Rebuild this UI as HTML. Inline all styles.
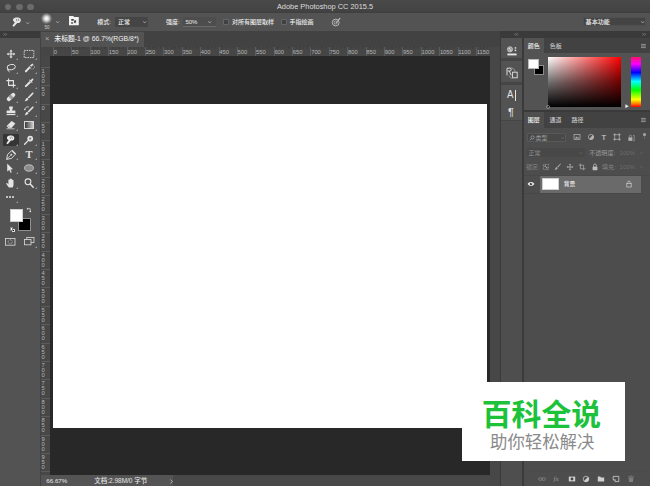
<!DOCTYPE html>
<html lang="zh-CN">
<head>
<meta charset="utf-8">
<title>Adobe Photoshop CC 2015.5</title>
<style>
*{box-sizing:border-box;margin:0;padding:0}
html,body{width:650px;height:486px;overflow:hidden;background:#535353}
body{position:relative;font-family:"Liberation Sans","Noto Sans CJK SC",sans-serif;color:#d6d6d6;font-size:6px;line-height:1}
.a{position:absolute}
.t{position:absolute;white-space:nowrap;line-height:1;transform:translateY(-50%)}
svg{position:absolute;overflow:visible}
#title{left:0;top:0;width:650px;height:12.5px;background:linear-gradient(#494949 0,#444 80%,#3e3e3e 100%)}
#title .t{left:0;width:650px;text-align:center;top:6.7px;font-size:7.4px;color:#dedede}
.tl{position:absolute;top:3.95px;width:6.4px;height:6.4px;border-radius:50%;background:#6b6b6b}
#opt{left:0;top:12.5px;width:650px;height:18px;background:#535353}
#tools{left:0;top:31px;width:40px;height:455px;background:#535353}
#toolhead{left:0;top:31px;width:40px;height:6.5px;background:#3a3a3a}
#docbg{left:40px;top:31px;width:460px;height:455px;background:#424242}
#tab{left:40.5px;top:32px;width:103.8px;height:14.6px;background:#535353}
#hr{left:41px;top:46.5px;width:449px;height:9.5px;background:repeating-linear-gradient(90deg,#3c3c3c 0,#3c3c3c 1.2px,rgba(0,0,0,0) 1.2px,rgba(0,0,0,0) 3.678px) 12px 0/100% 1.6px no-repeat,#464646}
#vr{left:41px;top:56px;width:9px;height:419px;background:#474747}
#cv{left:50px;top:56px;width:440px;height:419px;background:#282828}
#doc{left:53px;top:103.5px;width:434px;height:324.5px;background:#fff}
#status{left:41px;top:475.2px;width:449px;height:11px;background:linear-gradient(90deg,#545454 0,#545454 132px,#484848 132px)}
#rgap{left:490px;top:46.5px;width:10px;height:440px;background:#474747}
#dockhead{left:500px;top:31px;width:150px;height:7px;background:#3a3a3a}
#strip{left:501px;top:38px;width:20.5px;height:448px;background:#535353}
#div1{left:521.5px;top:38px;width:2px;height:448px;background:#3a3a3a}
#div0{left:499.5px;top:31px;width:1.5px;height:455px;background:#3a3a3a}
.rl{position:absolute;font-size:5.8px;color:#b6b6b6;transform:translateY(-50%);line-height:1;white-space:nowrap}
.vl{position:absolute;font-size:5.8px;color:#b6b6b6;line-height:5px;width:6px;text-align:center;white-space:pre-line}
.tk{position:absolute;background:#5c5c5c}
.ot{font-size:6px;color:#ececec;font-weight:500}
.ptabbar{position:absolute;left:523.5px;width:126.5px;background:#424242}
.ptab{position:absolute;background:#535353}
.pt{font-size:6px;color:#f0f0f0;font-weight:500}
.pt2{font-size:6px;color:#c4c4c4;font-weight:500}
.dim{font-size:6px;color:#8f8f8f}
#wm{left:461.9px;top:381.8px;width:163.3px;height:79px;background:#fff}
</style>
</head>
<body>
<div id="title" class="a"><div class="tl" style="left:5px"></div><div class="tl" style="left:16.3px"></div><div class="tl" style="left:27.3px"></div><div class="t">Adobe Photoshop CC 2015.5</div></div>
<div id="opt" class="a"></div>
<div id="tools" class="a"></div><div id="toolhead" class="a"></div>
<div id="docbg" class="a"></div><div id="tab" class="a"></div><div id="hr" class="a"></div><div id="vr" class="a"></div><div id="cv" class="a"></div><div id="doc" class="a"></div><div id="status" class="a"></div><div id="rgap" class="a"></div>
<div id="dockhead" class="a"></div><div id="div0" class="a"></div><div id="strip" class="a"></div><div id="div1" class="a"></div>
<div class="tk" style="left:53.00px;top:47px;width:.6px;height:9px"></div>
<div class="rl" style="left:53.70px;top:52.5px">0</div>
<div class="tk" style="left:71.39px;top:47px;width:.6px;height:9px"></div>
<div class="rl" style="left:72.09px;top:52.5px">50</div>
<div class="tk" style="left:89.78px;top:47px;width:.6px;height:9px"></div>
<div class="rl" style="left:90.48px;top:52.5px">100</div>
<div class="tk" style="left:108.17px;top:47px;width:.6px;height:9px"></div>
<div class="rl" style="left:108.87px;top:52.5px">150</div>
<div class="tk" style="left:126.56px;top:47px;width:.6px;height:9px"></div>
<div class="rl" style="left:127.26px;top:52.5px">200</div>
<div class="tk" style="left:144.95px;top:47px;width:.6px;height:9px"></div>
<div class="rl" style="left:145.65px;top:52.5px">250</div>
<div class="tk" style="left:163.34px;top:47px;width:.6px;height:9px"></div>
<div class="rl" style="left:164.04px;top:52.5px">300</div>
<div class="tk" style="left:181.73px;top:47px;width:.6px;height:9px"></div>
<div class="rl" style="left:182.43px;top:52.5px">350</div>
<div class="tk" style="left:200.12px;top:47px;width:.6px;height:9px"></div>
<div class="rl" style="left:200.82px;top:52.5px">400</div>
<div class="tk" style="left:218.51px;top:47px;width:.6px;height:9px"></div>
<div class="rl" style="left:219.21px;top:52.5px">450</div>
<div class="tk" style="left:236.90px;top:47px;width:.6px;height:9px"></div>
<div class="rl" style="left:237.60px;top:52.5px">500</div>
<div class="tk" style="left:255.29px;top:47px;width:.6px;height:9px"></div>
<div class="rl" style="left:255.99px;top:52.5px">550</div>
<div class="tk" style="left:273.68px;top:47px;width:.6px;height:9px"></div>
<div class="rl" style="left:274.38px;top:52.5px">600</div>
<div class="tk" style="left:292.07px;top:47px;width:.6px;height:9px"></div>
<div class="rl" style="left:292.77px;top:52.5px">650</div>
<div class="tk" style="left:310.46px;top:47px;width:.6px;height:9px"></div>
<div class="rl" style="left:311.16px;top:52.5px">700</div>
<div class="tk" style="left:328.85px;top:47px;width:.6px;height:9px"></div>
<div class="rl" style="left:329.55px;top:52.5px">750</div>
<div class="tk" style="left:347.24px;top:47px;width:.6px;height:9px"></div>
<div class="rl" style="left:347.94px;top:52.5px">800</div>
<div class="tk" style="left:365.63px;top:47px;width:.6px;height:9px"></div>
<div class="rl" style="left:366.33px;top:52.5px">850</div>
<div class="tk" style="left:384.02px;top:47px;width:.6px;height:9px"></div>
<div class="rl" style="left:384.72px;top:52.5px">900</div>
<div class="tk" style="left:402.41px;top:47px;width:.6px;height:9px"></div>
<div class="rl" style="left:403.11px;top:52.5px">950</div>
<div class="tk" style="left:420.80px;top:47px;width:.6px;height:9px"></div>
<div class="rl" style="left:421.50px;top:52.5px">1000</div>
<div class="tk" style="left:439.19px;top:47px;width:.6px;height:9px"></div>
<div class="rl" style="left:439.89px;top:52.5px">1050</div>
<div class="tk" style="left:457.58px;top:47px;width:.6px;height:9px"></div>
<div class="rl" style="left:458.28px;top:52.5px">1100</div>
<div class="tk" style="left:475.97px;top:47px;width:.6px;height:9px"></div>
<div class="rl" style="left:476.67px;top:52.5px">1150</div>
<div class="tk" style="left:41px;top:66.72px;width:9px;height:.6px"></div>
<div class="vl" style="left:40px;top:68.72px">1
0
0</div>
<div class="tk" style="left:41px;top:85.11px;width:9px;height:.6px"></div>
<div class="vl" style="left:40px;top:87.11px">5
0</div>
<div class="tk" style="left:41px;top:103.50px;width:9px;height:.6px"></div>
<div class="vl" style="left:40px;top:105.50px">0</div>
<div class="tk" style="left:41px;top:121.89px;width:9px;height:.6px"></div>
<div class="vl" style="left:40px;top:123.89px">5
0</div>
<div class="tk" style="left:41px;top:140.28px;width:9px;height:.6px"></div>
<div class="vl" style="left:40px;top:142.28px">1
0
0</div>
<div class="tk" style="left:41px;top:158.67px;width:9px;height:.6px"></div>
<div class="vl" style="left:40px;top:160.67px">1
5
0</div>
<div class="tk" style="left:41px;top:177.06px;width:9px;height:.6px"></div>
<div class="vl" style="left:40px;top:179.06px">2
0
0</div>
<div class="tk" style="left:41px;top:195.45px;width:9px;height:.6px"></div>
<div class="vl" style="left:40px;top:197.45px">2
5
0</div>
<div class="tk" style="left:41px;top:213.84px;width:9px;height:.6px"></div>
<div class="vl" style="left:40px;top:215.84px">3
0
0</div>
<div class="tk" style="left:41px;top:232.23px;width:9px;height:.6px"></div>
<div class="vl" style="left:40px;top:234.23px">3
5
0</div>
<div class="tk" style="left:41px;top:250.62px;width:9px;height:.6px"></div>
<div class="vl" style="left:40px;top:252.62px">4
0
0</div>
<div class="tk" style="left:41px;top:269.01px;width:9px;height:.6px"></div>
<div class="vl" style="left:40px;top:271.01px">4
5
0</div>
<div class="tk" style="left:41px;top:287.40px;width:9px;height:.6px"></div>
<div class="vl" style="left:40px;top:289.40px">5
0
0</div>
<div class="tk" style="left:41px;top:305.79px;width:9px;height:.6px"></div>
<div class="vl" style="left:40px;top:307.79px">5
5
0</div>
<div class="tk" style="left:41px;top:324.18px;width:9px;height:.6px"></div>
<div class="vl" style="left:40px;top:326.18px">6
0
0</div>
<div class="tk" style="left:41px;top:342.57px;width:9px;height:.6px"></div>
<div class="vl" style="left:40px;top:344.57px">6
5
0</div>
<div class="tk" style="left:41px;top:360.96px;width:9px;height:.6px"></div>
<div class="vl" style="left:40px;top:362.96px">7
0
0</div>
<div class="tk" style="left:41px;top:379.35px;width:9px;height:.6px"></div>
<div class="vl" style="left:40px;top:381.35px">7
5
0</div>
<div class="tk" style="left:41px;top:397.74px;width:9px;height:.6px"></div>
<div class="vl" style="left:40px;top:399.74px">8
0
0</div>
<div class="tk" style="left:41px;top:416.13px;width:9px;height:.6px"></div>
<div class="vl" style="left:40px;top:418.13px">8
5
0</div>
<div class="tk" style="left:41px;top:434.52px;width:9px;height:.6px"></div>
<div class="vl" style="left:40px;top:436.52px">9
0
0</div>
<div class="tk" style="left:41px;top:452.91px;width:9px;height:.6px"></div>
<div class="vl" style="left:40px;top:454.91px">9
5
0</div>
<div class="tk" style="left:41px;top:471.30px;width:9px;height:.6px"></div>
<div class="t" style="left:45px;top:39.2px;font-size:7.5px;color:#b0b0b0">×</div>
<div class="t" style="left:54.3px;top:39.4px;font-size:6.85px;color:#f0f0f0;font-weight:500">未标题-1 @ 66.7%(RGB/8*)</div>
<div class="t" style="left:46.3px;top:481.3px;font-size:6.2px;color:#e6e6e6;font-weight:500">66.67%</div>
<div class="t" style="left:94.2px;top:481.3px;font-size:6.5px;color:#e6e6e6;font-weight:500">文档:2.98M/0 字节</div>
<svg style="left:169.8px;top:479px" width="3" height="5" viewBox="0 0 3 5"><path d="M.5 .5 L2.4 2.5 L.5 4.5" fill="none" stroke="#c4c4c4" stroke-width=".8"/></svg>
<svg style="left:11.3px;top:16.1px" width="12.0" height="12.0" viewBox="-6 -6 12 12"><path d="M-3.4 -3.4 C-2.2 -4.9 2.4 -5 3.5 -3.2 C4.3 -1.7 3.6 .4 2 .9 L.2 .9 L-3.1 4.7 L-4.6 3.7 L-2.1 .2 C-4 -.2 -4.5 -2.2 -3.4 -3.4 Z" fill="#e8e8e8"/><path d="M-.8 -3.2 L-.1 -.8 M1.2 -3.4 L1.8 -1.1" stroke="#555" stroke-width=".6" fill="none"/></svg>
<svg style="left:25.7px;top:21.5px" width="3.4" height="3.0" viewBox="-1.7 -1.0 3.4 3.0"><path d="M-1.4 -0.7 L0 1.0 L1.4 -0.7" fill="none" stroke="#b4b4b4" stroke-width="0.75"/></svg>
<div class="a" style="left:41.3px;top:12.9px;width:11px;height:11px;border-radius:50%;background:radial-gradient(circle,#fff 0%,#e0e0e0 25%,rgba(170,170,170,.55) 55%,rgba(83,83,83,0) 75%)"></div>
<div class="t ot" style="left:44.4px;top:27.5px;font-size:4.6px;color:#cfcfcf">50</div>
<svg style="left:55.8px;top:21.0px" width="3.4" height="3.0" viewBox="-1.7 -1.0 3.4 3.0"><path d="M-1.4 -0.7 L0 1.0 L1.4 -0.7" fill="none" stroke="#b4b4b4" stroke-width="0.75"/></svg>
<svg style="left:69px;top:16.3px" width="9.8" height="9.3" viewBox="0 0 9.5 10" preserveAspectRatio="none"><path d="M0 0 H4 L5 1.2 H9.5 V10 H0 Z" fill="#f2f2f2"/><path d="M2.2 3.2 h2.4 v2 h-2.4z M5.6 4 l1.6 1.4 -1.2 2.6 -1.4 -1.2z M2.4 6.4 l1.6 .6 -.6 1.6 -1.4 -.4z" fill="#444"/></svg>
<div class="t ot" style="left:97.3px;top:21.7px;">模式:</div>
<div class="a" style="left:115px;top:17.3px;width:33px;height:9.4px;background:#454545;border-radius:1px"></div>
<div class="t ot" style="left:118px;top:21.7px;color:#eee">正常</div>
<svg style="left:142.60000000000002px;top:21.0px" width="3.4" height="3.0" viewBox="-1.7 -1.0 3.4 3.0"><path d="M-1.4 -0.7 L0 1.0 L1.4 -0.7" fill="none" stroke="#b4b4b4" stroke-width="0.75"/></svg>
<div class="t ot" style="left:166px;top:21.7px;">强度:</div>
<div class="a" style="left:183px;top:17.3px;width:33px;height:9.4px;background:#4d4d4d;border-bottom:.7px solid #6a6a6a"></div>
<div class="t ot" style="left:185.4px;top:21.7px;">50%</div>
<svg style="left:208.10000000000002px;top:21.0px" width="3.4" height="3.0" viewBox="-1.7 -1.0 3.4 3.0"><path d="M-1.4 -0.7 L0 1.0 L1.4 -0.7" fill="none" stroke="#b4b4b4" stroke-width="0.75"/></svg>
<div class="a" style="left:223.2px;top:18.9px;width:6.2px;height:6.2px;background:#414141;border:.6px solid #666;border-radius:.8px"></div>
<div class="t ot" style="left:232px;top:21.7px;">对所有图层取样</div>
<div class="a" style="left:281px;top:18.9px;width:6.2px;height:6.2px;background:#414141;border:.6px solid #666;border-radius:.8px"></div>
<div class="t ot" style="left:289.5px;top:21.7px;">手指绘画</div>
<svg style="left:331.4px;top:16.5px" width="10" height="10" viewBox="-5 -5 10 10"><circle cx="-.3" cy=".5" r="3.4" fill="none" stroke="#cfcfcf" stroke-width=".8"/><circle cx="-.3" cy=".5" r="1.6" fill="none" stroke="#cfcfcf" stroke-width=".6"/><path d="M-.6 1 L3.6 -4.2 L4.6 -3.4 L.2 1.6 Z" fill="#e6e6e6" stroke="#535353" stroke-width=".4"/></svg>
<div class="a" style="left:582.8px;top:16.8px;width:63px;height:9.4px;background:#444;border:.5px solid #505050;border-radius:1.2px"></div>
<div class="t ot" style="left:585.6px;top:21.9px;color:#f2f2f2;font-size:6.1px">基本功能</div>
<svg style="left:640.6999999999999px;top:21.0px" width="3.4" height="3.0" viewBox="-1.7 -1.0 3.4 3.0"><path d="M-1.4 -0.7 L0 1.0 L1.4 -0.7" fill="none" stroke="#b4b4b4" stroke-width="0.75"/></svg>
<div class="a" style="left:2.7px;top:133.5px;width:16px;height:12.2px;background:#353535;border-radius:1px"></div>
<svg style="left:16.2px;top:57.7px" width="2" height="2" viewBox="0 0 2 2"><path d="M2 0 V2 H0 Z" fill="#9a9a9a"/></svg>
<svg style="left:34.6px;top:57.7px" width="2" height="2" viewBox="0 0 2 2"><path d="M2 0 V2 H0 Z" fill="#9a9a9a"/></svg>
<svg style="left:16.2px;top:72.1px" width="2" height="2" viewBox="0 0 2 2"><path d="M2 0 V2 H0 Z" fill="#9a9a9a"/></svg>
<svg style="left:34.6px;top:72.1px" width="2" height="2" viewBox="0 0 2 2"><path d="M2 0 V2 H0 Z" fill="#9a9a9a"/></svg>
<svg style="left:16.2px;top:86.5px" width="2" height="2" viewBox="0 0 2 2"><path d="M2 0 V2 H0 Z" fill="#9a9a9a"/></svg>
<svg style="left:34.6px;top:86.5px" width="2" height="2" viewBox="0 0 2 2"><path d="M2 0 V2 H0 Z" fill="#9a9a9a"/></svg>
<svg style="left:16.2px;top:100.89999999999999px" width="2" height="2" viewBox="0 0 2 2"><path d="M2 0 V2 H0 Z" fill="#9a9a9a"/></svg>
<svg style="left:34.6px;top:100.89999999999999px" width="2" height="2" viewBox="0 0 2 2"><path d="M2 0 V2 H0 Z" fill="#9a9a9a"/></svg>
<svg style="left:16.2px;top:115.3px" width="2" height="2" viewBox="0 0 2 2"><path d="M2 0 V2 H0 Z" fill="#9a9a9a"/></svg>
<svg style="left:34.6px;top:115.3px" width="2" height="2" viewBox="0 0 2 2"><path d="M2 0 V2 H0 Z" fill="#9a9a9a"/></svg>
<svg style="left:16.2px;top:129.2px" width="2" height="2" viewBox="0 0 2 2"><path d="M2 0 V2 H0 Z" fill="#9a9a9a"/></svg>
<svg style="left:34.6px;top:129.2px" width="2" height="2" viewBox="0 0 2 2"><path d="M2 0 V2 H0 Z" fill="#9a9a9a"/></svg>
<svg style="left:16.2px;top:143.7px" width="2" height="2" viewBox="0 0 2 2"><path d="M2 0 V2 H0 Z" fill="#9a9a9a"/></svg>
<svg style="left:34.6px;top:143.7px" width="2" height="2" viewBox="0 0 2 2"><path d="M2 0 V2 H0 Z" fill="#9a9a9a"/></svg>
<svg style="left:16.2px;top:158.2px" width="2" height="2" viewBox="0 0 2 2"><path d="M2 0 V2 H0 Z" fill="#9a9a9a"/></svg>
<svg style="left:34.6px;top:158.2px" width="2" height="2" viewBox="0 0 2 2"><path d="M2 0 V2 H0 Z" fill="#9a9a9a"/></svg>
<svg style="left:16.2px;top:172.2px" width="2" height="2" viewBox="0 0 2 2"><path d="M2 0 V2 H0 Z" fill="#9a9a9a"/></svg>
<svg style="left:34.6px;top:172.2px" width="2" height="2" viewBox="0 0 2 2"><path d="M2 0 V2 H0 Z" fill="#9a9a9a"/></svg>
<svg style="left:16.2px;top:187.0px" width="2" height="2" viewBox="0 0 2 2"><path d="M2 0 V2 H0 Z" fill="#9a9a9a"/></svg>
<svg style="left:34.6px;top:187.0px" width="2" height="2" viewBox="0 0 2 2"><path d="M2 0 V2 H0 Z" fill="#9a9a9a"/></svg>
<svg style="left:4.6px;top:48.1px" width="12" height="12" viewBox="-6 -6 12 12"><path d="M0 -4.4 L1.6 -2.4 H.6 V-.6 H2.4 V-1.6 L4.4 0 L2.4 1.6 V.6 H.6 V2.4 H1.6 L0 4.4 L-1.6 2.4 H-.6 V.6 H-2.4 V1.6 L-4.4 0 L-2.4 -1.6 V-.6 H-.6 V-2.4 H-1.6 Z" fill="#e4e4e4"/></svg>
<svg style="left:23.2px;top:47.7px" width="12" height="12" viewBox="-6 -6 12 12"><rect x="-4.8" y="-3.6" width="9.6" height="7.2" fill="none" stroke="#e4e4e4" stroke-width=".9" stroke-dasharray="1.5 .9"/></svg>
<svg style="left:4.6px;top:62px" width="12" height="12" viewBox="-6 -6 12 12"><ellipse cx=".4" cy="-.8" rx="4.2" ry="2.7" fill="none" stroke="#e4e4e4" stroke-width=".9" transform="rotate(-12)"/><path d="M-3.2 .6 C-4 1.6 -3 2.4 -2.2 2 C-1.6 1.6 -2.6 .8 -3 1.6 C-3.4 2.6 -2.6 3.6 -1.4 4" fill="none" stroke="#e4e4e4" stroke-width=".8"/></svg>
<svg style="left:23.2px;top:62.3px" width="12" height="12" viewBox="-6 -6 12 12"><path d="M-3.8 4.2 L-4.2 3 L.4 -1.8 L1.8 -.6 L-2.6 4.2 Z" fill="#e4e4e4"/><path d="M1 -2.4 L3.6 -4.6 L4.4 -3.6 L2.4 -1.2 Z" fill="#e4e4e4"/><ellipse cx="3" cy="-1" rx="2.6" ry="2" fill="none" stroke="#e4e4e4" stroke-width=".6" stroke-dasharray=".9 .7"/></svg>
<svg style="left:4.6px;top:76.7px" width="12" height="12" viewBox="-6 -6 12 12"><path d="M-2.4 -4.6 V2.4 H4.6 M-4.6 -2.4 H2.4 V4.6" fill="none" stroke="#e4e4e4" stroke-width="1.1"/></svg>
<svg style="left:23.2px;top:76.7px" width="12" height="12" viewBox="-6 -6 12 12"><path d="M-4.2 4.2 L-3.8 2.4 L.6 -2 L2 -.6 L-2.4 3.8 Z" fill="#e4e4e4"/><path d="M0 -3 L3 0 L3.6 -.6 L2.8 -1.6 L4.2 -3 C4.8 -3.8 3.8 -4.8 3 -4.2 L1.6 -2.8 L.6 -3.6 Z" fill="#e4e4e4"/></svg>
<svg style="left:4.6px;top:90.8px" width="12" height="12" viewBox="-6 -6 12 12"><g transform="rotate(-42)"><rect x="-5" y="-2" width="10" height="4" rx="1.8" fill="#e4e4e4"/><rect x="-1.5" y="-2" width="3" height="4" fill="#9a9a9a"/></g></svg>
<svg style="left:23.2px;top:90.8px" width="12" height="12" viewBox="-6 -6 12 12"><path d="M4.2 -4.4 C4.8 -4 4.6 -3.4 4.2 -3 L-.2 1.6 L-1.4 .4 L3.2 -4.2 C3.6 -4.6 3.9 -4.6 4.2 -4.4 Z" fill="#e4e4e4"/><path d="M-1.8 .8 L-.6 2 C-1 3.4 -2.6 4.4 -4.4 4.2 C-3.6 3.6 -3.6 2.8 -3.2 2 C-2.9 1.3 -2.4 .9 -1.8 .8 Z" fill="#e4e4e4"/></svg>
<svg style="left:4.6px;top:105.4px" width="12" height="12" viewBox="-6 -6 12 12"><path d="M-1.7 -4.4 H1.7 C2.4 -3.2 1.2 -1.6 1 -.4 H3.6 C4.2 -.4 4.4 0 4.4 .6 V2 H-4.4 V.6 C-4.4 0 -4.2 -.4 -3.6 -.4 H-1 C-1.2 -1.6 -2.4 -3.2 -1.7 -4.4 Z" fill="#e4e4e4"/><rect x="-4.4" y="2.8" width="8.8" height="1.3" fill="#e4e4e4"/></svg>
<svg style="left:23.2px;top:105.2px" width="12" height="12" viewBox="-6 -6 12 12"><path d="M4.2 -4.4 C4.8 -4 4.6 -3.4 4.2 -3 L-.2 1.6 L-1.4 .4 L3.2 -4.2 C3.6 -4.6 3.9 -4.6 4.2 -4.4 Z" fill="#e4e4e4"/><path d="M-1.8 .8 L-.6 2 C-1 3.4 -2.6 4.4 -4.4 4.2 C-3.6 3.6 -3.6 2.8 -3.2 2 C-2.9 1.3 -2.4 .9 -1.8 .8 Z" fill="#e4e4e4"/><path d="M-4.2 -1.4 A3 3 0 0 1 -.2 -4" fill="none" stroke="#e4e4e4" stroke-width=".8"/><path d="M-5.2 -2 L-3.2 -2.2 L-4 -.4 Z" fill="#e4e4e4"/></svg>
<svg style="left:4.6px;top:119.4px" width="12" height="12" viewBox="-6 -6 12 12"><path d="M-4.4 1 L.6 -4 L4.4 -1.4 L.2 3.2 H-2.4 Z" fill="#e4e4e4"/><path d="M-3.2 .6 L-.6 2.6" stroke="#666" stroke-width=".5"/><path d="M-4.6 3.8 H3.6" stroke="#e4e4e4" stroke-width=".7"/></svg>
<div class="a" style="left:24.2px;top:121.3px;width:9.4px;height:7.4px;border:.8px solid #d8d8d8;background:linear-gradient(90deg,#3a3a3a,#c8c8c8)"></div>
<svg style="left:5.200000000000001px;top:134.10000000000002px" width="11.399999999999999" height="11.399999999999999" viewBox="-6 -6 12 12"><path d="M-3.4 -3.4 C-2.2 -4.9 2.4 -5 3.5 -3.2 C4.3 -1.7 3.6 .4 2 .9 L.2 .9 L-3.1 4.7 L-4.6 3.7 L-2.1 .2 C-4 -.2 -4.5 -2.2 -3.4 -3.4 Z" fill="#ededed"/><path d="M-.8 -3.2 L-.1 -.8 M1.2 -3.4 L1.8 -1.1" stroke="#555" stroke-width=".6" fill="none"/></svg>
<svg style="left:23.2px;top:134px" width="12" height="12" viewBox="-6 -6 12 12"><circle cx="1.2" cy="-1.4" r="2.9" fill="#e4e4e4"/><path d="M-.6 .4 L-4.4 4.2" stroke="#e4e4e4" stroke-width="1.3" stroke-linecap="round"/><circle cx="1.2" cy="-1.4" r="1.1" fill="#777"/></svg>
<svg style="left:4.6px;top:148.5px" width="12" height="12" viewBox="-6 -6 12 12"><path d="M-4.4 4.4 L-3.4 -.6 L.6 -4.2 L4.2 -.6 L.6 3.4 Z" fill="none" stroke="#e4e4e4" stroke-width=".9" stroke-linejoin="round"/><path d="M-4.2 4.2 L-.2 .2" stroke="#e4e4e4" stroke-width=".7"/><circle cx=".3" cy="-.3" r=".9" fill="#e4e4e4"/><path d="M1 -4.6 L4.6 -1" stroke="#e4e4e4" stroke-width="1.2"/></svg>
<div class="t" style="left:25.6px;top:154.6px;font-family:'Liberation Serif',serif;font-size:10.5px;font-weight:bold;color:#e4e4e4">T</div>
<svg style="left:4.199999999999999px;top:162.2px" width="12" height="12" viewBox="-6 -6 12 12"><path d="M-2.8 -4.6 L3 1.2 L.4 1.4 L1.8 4.2 L.6 4.8 L-.8 2 L-2.8 3.6 Z" fill="#e4e4e4"/></svg>
<svg style="left:22.8px;top:161.8px" width="12" height="12" viewBox="-6 -6 12 12"><ellipse cx="0" cy="0" rx="4.4" ry="3.2" fill="#8c8c8c" stroke="#cfcfcf" stroke-width=".8"/></svg>
<svg style="left:4.6px;top:177.2px" width="12" height="12" viewBox="-6 -6 12 12"><path d="M-2.2 4.6 C-3.2 3 -4.6 1.6 -4.8 .6 C-4.9 -.2 -4 -.4 -3.4 .4 L-2.6 1.4 V-2.8 C-2.6 -3.8 -1.4 -3.8 -1.4 -2.8 V-3.8 C-1.4 -4.8 -.1 -4.8 -.1 -3.8 V-3.4 C-.1 -4.4 1.2 -4.4 1.2 -3.4 V-2.6 C1.2 -3.5 2.5 -3.5 2.5 -2.6 V1.6 C2.5 3 2 3.8 1.6 4.6 Z" fill="#e4e4e4"/></svg>
<svg style="left:22.8px;top:177.2px" width="12" height="12" viewBox="-6 -6 12 12"><circle cx="-1" cy="-1.2" r="2.9" fill="none" stroke="#e4e4e4" stroke-width="1.1"/><path d="M1.2 1 L4.2 4.2" stroke="#e4e4e4" stroke-width="1.5" stroke-linecap="round"/></svg>
<div class="a" style="left:6px;top:196px;width:2px;height:2px;border-radius:50%;background:#e4e4e4"></div>
<div class="a" style="left:9.2px;top:196px;width:2px;height:2px;border-radius:50%;background:#e4e4e4"></div>
<div class="a" style="left:12.4px;top:196px;width:2px;height:2px;border-radius:50%;background:#e4e4e4"></div>
<svg style="left:16.2px;top:200.5px" width="2" height="2" viewBox="0 0 2 2"><path d="M2 0 V2 H0 Z" fill="#9a9a9a"/></svg>
<div class="a" style="left:18.3px;top:217.6px;width:13px;height:13px;background:#000;border:.8px solid #909090"></div>
<div class="a" style="left:10px;top:208.5px;width:13.3px;height:13.2px;background:#fff;border:.6px solid #cfcfcf"></div>
<svg style="left:25.3px;top:205.8px" width="8" height="8" viewBox="-4 -4 8 8"><g transform="scale(.8)"><path d="M-2 -1.6 H1.6 V2" fill="none" stroke="#e4e4e4" stroke-width=".9"/><path d="M-3 -1.6 L-1.4 -3 V-.2 Z M1.6 3 L.2 1.4 H3 Z" fill="#e4e4e4"/></g></svg>
<div class="a" style="left:11.6px;top:228.8px;width:3.6px;height:3.6px;background:#111;border:.5px solid #ddd"></div><div class="a" style="left:9.8px;top:227px;width:3.6px;height:3.6px;background:#fff;border:.4px solid #888"></div>
<svg style="left:5px;top:237.8px" width="10.4" height="7.6" viewBox="0 0 10.4 7.6"><rect x=".4" y=".4" width="9.6" height="6.8" fill="none" stroke="#dcdcdc" stroke-width=".8"/><circle cx="5.2" cy="3.8" r="2" fill="none" stroke="#dcdcdc" stroke-width=".7" stroke-dasharray=".8 .6"/></svg>
<svg style="left:23.8px;top:237.2px" width="10.4" height="8.4" viewBox="0 0 10.4 8.4"><rect x="2.8" y=".4" width="7.2" height="5.2" fill="#535353" stroke="#dcdcdc" stroke-width=".8"/><rect x=".4" y="2.6" width="6.6" height="5.2" fill="#535353" stroke="#dcdcdc" stroke-width=".8"/></svg>
<svg style="left:34.6px;top:245.5px" width="2" height="2" viewBox="0 0 2 2"><path d="M2 0 V2 H0 Z" fill="#9a9a9a"/></svg>
<svg style="left:2.8px;top:32.9px" width="4.4" height="2.8" viewBox="-2.2 -1.4 4.4 2.8"><g transform="scale(1,1)"><path d="M-1.8 -1.2 L-.6 0 L-1.8 1.2 M.2 -1.2 L1.4 0 L.2 1.2" fill="none" stroke="#9c9c9c" stroke-width=".6"/></g></svg>
<svg style="left:514.1999999999999px;top:32.9px" width="4.4" height="2.8" viewBox="-2.2 -1.4 4.4 2.8"><g transform="scale(-1,1)"><path d="M-1.8 -1.2 L-.6 0 L-1.8 1.2 M.2 -1.2 L1.4 0 L.2 1.2" fill="none" stroke="#9c9c9c" stroke-width=".6"/></g></svg>
<svg style="left:641.8px;top:32.9px" width="4.4" height="2.8" viewBox="-2.2 -1.4 4.4 2.8"><g transform="scale(1,1)"><path d="M-1.8 -1.2 L-.6 0 L-1.8 1.2 M.2 -1.2 L1.4 0 L.2 1.2" fill="none" stroke="#9c9c9c" stroke-width=".6"/></g></svg>
<div class="a" style="left:501px;top:121px;width:20.5px;height:365px;background:#4e4e4e"></div>
<div class="a" style="left:501px;top:58.2px;width:20.5px;height:2.4px;background:#454545"></div>
<div class="a" style="left:501px;top:82.2px;width:20.5px;height:2.4px;background:#454545"></div>
<div class="a" style="left:501px;top:119.6px;width:20.5px;height:1.6px;background:#454545"></div>
<svg style="left:505.5px;top:44.5px" width="12" height="12" viewBox="-6 -6 12 12"><circle cx="-2" cy="-1.7" r="2.6" fill="#9a9a9a" stroke="#e4e4e4" stroke-width=".6"/><circle cx="-2.6" cy="-2.2" r=".8" fill="#e4e4e4"/><circle cx="-1.2" cy="-.8" r=".7" fill="#e4e4e4"/><rect x="2.7" y="-3.8" width="1.5" height="1.5" fill="#e4e4e4"/><rect x="2.7" y="-1.4" width="1.5" height="1.5" fill="#e4e4e4"/><rect x="-4.6" y="2.5" width="9.2" height="1.9" fill="#e4e4e4"/></svg>
<svg style="left:505.5px;top:66.5px" width="12" height="12" viewBox="-6 -6 12 12"><path d="M-5 2.4 V-4.8 H-2.2 C-.2 -4.8 -.2 -2 -2.2 -2 H-4.4 M-2.6 -2 L-.8 2.4" fill="none" stroke="#e4e4e4" stroke-width=".9"/><rect x=".6" y="-.8" width="4.6" height="5.6" fill="none" stroke="#e4e4e4" stroke-width=".9"/><path d="M-2.6 -5 C.6 -5.6 3 -4 3 -1.2 M-2.8 2.6 C-2.6 4.6 -1 5.4 .6 5" fill="none" stroke="#bdbdbd" stroke-width=".6"/></svg>
<div class="t" style="left:507.4px;top:95.4px;font-size:11.2px;color:#e4e4e4;transform:translateY(-50%) scaleX(.86);transform-origin:0 50%">A</div>
<div class="a" style="left:515.3px;top:90.2px;width:.9px;height:10.6px;background:#e4e4e4"></div>
<div class="t" style="left:507.6px;top:112.6px;font-size:11.5px;color:#e4e4e4;transform:translateY(-50%) scaleX(.95);transform-origin:0 50%">¶</div>
<div class="ptabbar" style="top:38px;height:15.2px"></div>
<div class="ptab" style="left:523.5px;top:38px;width:20.5px;height:15.2px"></div>
<div class="t pt" style="left:527.8px;top:45.8px;">颜色</div>
<div class="t pt2" style="left:549.8px;top:45.8px;">色板</div>
<svg style="left:640.9px;top:43.8px" width="4.8" height="4" viewBox="0 0 4.8 4"><path d="M0 .4 H4.8 M0 2 H4.8 M0 3.6 H4.8" stroke="#b0b0b0" stroke-width=".7"/></svg>
<div class="a" style="left:533.5px;top:65.4px;width:10.4px;height:9.5px;background:#000;border:.7px solid #8c8c8c"></div>
<div class="a" style="left:528px;top:59px;width:10.5px;height:9.8px;background:#fff;border:.6px solid #bbb"></div>
<div class="a" style="left:547.8px;top:57.4px;width:73.6px;height:49.8px;background:linear-gradient(to top,#000 0%,rgba(0,0,0,.56) 50%,rgba(0,0,0,0) 100%),linear-gradient(to right,#fff,#f00)"></div>
<div class="a" style="left:546.4px;top:105.4px;width:3.4px;height:3.4px;border-radius:50%;border:.6px solid #8a8a8a"></div>
<div class="a" style="left:630.6px;top:57.4px;width:10.4px;height:49.8px;background:linear-gradient(to bottom,#ff1070 0%,#f0f 14%,#00f 31%,#0ff 49%,#0f0 66%,#ff0 85%,#f80 93%,#f00 100%)"></div>
<svg style="left:624.6px;top:104px" width="4" height="4.4" viewBox="0 0 4 4.4"><path d="M.4 .4 L3.6 2.2 L.4 4 Z" fill="#fff" stroke="#aaa" stroke-width=".4"/></svg>
<div class="a" style="left:523.5px;top:110.2px;width:126.5px;height:2.2px;background:#3a3a3a"></div>
<div class="a" style="left:523.5px;top:127.8px;width:126.5px;height:358.2px;background:#4d4d4d"></div>
<div class="ptabbar" style="top:112.4px;height:15.4px"></div>
<div class="ptab" style="left:523.5px;top:112.4px;width:20.8px;height:15.4px;background:#4e4e4e"></div>
<div class="t pt" style="left:527.8px;top:120.2px;">图层</div>
<div class="t pt2" style="left:549.6px;top:120.2px;">通道</div>
<div class="t pt2" style="left:571.4px;top:120.2px;">路径</div>
<svg style="left:640.9px;top:118.2px" width="4.8" height="4" viewBox="0 0 4.8 4"><path d="M0 .4 H4.8 M0 2 H4.8 M0 3.6 H4.8" stroke="#b0b0b0" stroke-width=".7"/></svg>
<div class="a" style="left:527px;top:132.8px;width:39px;height:9.4px;background:#484848;border:.5px solid #585858;border-radius:1px"></div>
<svg style="left:528.5px;top:134.5px" width="6" height="6" viewBox="-3 -3 6 6"><circle cx=".6" cy="-.6" r="1.6" fill="none" stroke="#a8a8a8" stroke-width=".7"/><path d="M-.6 .6 L-2.2 2.2" stroke="#a8a8a8" stroke-width=".8"/></svg>
<div class="t dim" style="left:535.6px;top:137.6px;color:#9c9c9c">类型</div>
<svg style="left:560.9px;top:136.9px" width="3.2" height="2.8" viewBox="-1.6 -0.9 3.2 2.8"><path d="M-1.3 -0.6000000000000001 L0 0.9 L1.3 -0.6000000000000001" fill="none" stroke="#777" stroke-width="0.6"/></svg>
<svg style="left:573.2px;top:133.4px" width="8" height="8" viewBox="-4 -4 8 8"><rect x="-3" y="-2.4" width="6" height="4.8" fill="none" stroke="#b4b4b4" stroke-width=".7"/><path d="M-2.2 1.6 L-.6 -.4 L.6 .8 L1.4 0 L2.2 1.6 Z" fill="#b4b4b4"/></svg>
<svg style="left:587px;top:133.4px" width="8" height="8" viewBox="-4 -4 8 8"><circle r="2.7" fill="none" stroke="#b4b4b4" stroke-width=".7"/><path d="M0 -2.7 A2.7 2.7 0 0 1 0 2.7 Z" fill="#b4b4b4" transform="rotate(40)"/></svg>
<div class="t" style="left:601.6px;top:137.6px;font-size:7.6px;font-weight:bold;color:#b4b4b4">T</div>
<svg style="left:613.4px;top:133.4px" width="8" height="8" viewBox="-4 -4 8 8"><rect x="-2.2" y="-2.2" width="4.4" height="4.4" fill="none" stroke="#b4b4b4" stroke-width=".7"/><path d="M-3.2 -2.2 H-2.2 V-3.2 M3.2 -2.2 H2.2 V-3.2 M-3.2 2.2 H-2.2 V3.2 M3.2 2.2 H2.2 V3.2" stroke="#b4b4b4" stroke-width=".7" fill="none"/><rect x="-3.3" y="-3.3" width="1.6" height="1.6" fill="#b4b4b4"/><rect x="1.7" y="-3.3" width="1.6" height="1.6" fill="#b4b4b4"/><rect x="-3.3" y="1.7" width="1.6" height="1.6" fill="#b4b4b4"/><rect x="1.7" y="1.7" width="1.6" height="1.6" fill="#b4b4b4"/></svg>
<svg style="left:627px;top:133.6px" width="8" height="8" viewBox="-4 -4 8 8"><rect x="-2.6" y="-.6" width="4" height="3.4" fill="#b4b4b4"/><path d="M-1.6 -.6 V-1.6 A1.1 1.1 0 0 1 .6 -1.6 V-.6" fill="none" stroke="#b4b4b4" stroke-width=".6"/><path d="M2 -2.6 H3.2 V2.8 H2.2" fill="none" stroke="#b4b4b4" stroke-width=".6"/></svg>
<div class="a" style="left:642.6px;top:132.6px;width:3.6px;height:3.6px;border-radius:50%;background:#a8a8a8"></div><div class="a" style="left:643.6px;top:136.2px;width:1.6px;height:3px;background:#666"></div>
<div class="a" style="left:527px;top:147.6px;width:58px;height:9.6px;background:#484848;border-radius:1px"></div>
<div class="t dim" style="left:528.4px;top:152.5px;">正常</div>
<svg style="left:579.0px;top:151.9px" width="3.2" height="2.8" viewBox="-1.6 -0.9 3.2 2.8"><path d="M-1.3 -0.6000000000000001 L0 0.9 L1.3 -0.6000000000000001" fill="none" stroke="#6c6c6c" stroke-width="0.6"/></svg>
<div class="t dim" style="left:589.2px;top:152.5px;font-size:6.1px;color:#9a9a9a">不透明度:</div>
<div class="t dim" style="left:619.6px;top:152.5px;color:#6c6c6c">100%</div>
<svg style="left:640.4px;top:151.9px" width="3.2" height="2.8" viewBox="-1.6 -0.9 3.2 2.8"><path d="M-1.3 -0.6000000000000001 L0 0.9 L1.3 -0.6000000000000001" fill="none" stroke="#686868" stroke-width="0.6"/></svg>
<div class="t dim" style="left:526px;top:167px;color:#848484">锁定:</div>
<svg style="left:542.2px;top:162.8px" width="8" height="8" viewBox="-4 -4 8 8"><rect x="-2.6" y="-2.6" width="5.2" height="5.2" fill="none" stroke="#a6a6a6" stroke-width=".7" stroke-dasharray="1 .6"/><path d="M-1.4 -1.4 h1.4 v1.4 h1.4 v1.4 h-1.4 v-1.4 h-1.4z" fill="#a6a6a6"/></svg>
<svg style="left:554.3px;top:162.8px" width="8" height="8" viewBox="-4 -4 8 8"><path d="M3.2 -3.4 L.2 .4 L-.8 -.4 L2.6 -3.6 Z" fill="#a6a6a6"/><path d="M-1.2 0 L-.2 .9 C-.6 2.2 -2 3 -3.4 2.8 C-2.8 2.2 -2.6 1.4 -2.4 .8 C-2.2 .2 -1.8 0 -1.2 0 Z" fill="#a6a6a6"/></svg>
<svg style="left:566.2px;top:162.8px" width="8" height="8" viewBox="-4 -4 8 8"><path d="M0 -3.4 L1.2 -2 H.4 V-.4 H2 V-1.2 L3.4 0 L2 1.2 V.4 H.4 V2 H1.2 L0 3.4 L-1.2 2 H-.4 V.4 H-2 V1.2 L-3.4 0 L-2 -1.2 V-.4 H-.4 V-2 H-1.2 Z" fill="#a6a6a6"/></svg>
<svg style="left:578.4px;top:162.8px" width="8" height="8" viewBox="-4 -4 8 8"><path d="M-1.6 -3.4 V1.8 H3.4 M-3.2 -1.8 H1.6 V3.2" fill="none" stroke="#a6a6a6" stroke-width=".8"/></svg>
<svg style="left:590.8px;top:162.6px" width="8" height="8" viewBox="-4 -4 8 8"><g transform="scale(1.0)"><rect x="-2.4" y="-.4" width="4.8" height="3.6" rx=".4" fill="#bdbdbd"/><path d="M-1.4 -.4 V-1.6 A1.4 1.4 0 0 1 1.4 -1.6 V-.4" fill="none" stroke="#bdbdbd" stroke-width=".8"/></g></svg>
<div class="t dim" style="left:602px;top:167px;color:#848484">填充:</div>
<div class="t dim" style="left:619.6px;top:167px;color:#6c6c6c">100%</div>
<svg style="left:640.4px;top:166.29999999999998px" width="3.2" height="2.8" viewBox="-1.6 -0.9 3.2 2.8"><path d="M-1.3 -0.6000000000000001 L0 0.9 L1.3 -0.6000000000000001" fill="none" stroke="#686868" stroke-width="0.6"/></svg>
<div class="a" style="left:523.5px;top:174.6px;width:126.5px;height:.8px;background:#484848"></div>
<div class="a" style="left:540px;top:175.6px;width:101.4px;height:17.2px;background:#6a6a6a"></div>
<div class="a" style="left:523.5px;top:193.4px;width:118px;height:.7px;background:#474747"></div>
<svg style="left:526.8px;top:180px" width="8" height="8" viewBox="-4 -4 8 8"><path d="M-3.4 0 C-1.8 -2.6 1.8 -2.6 3.4 0 C1.8 2.6 -1.8 2.6 -3.4 0 Z" fill="#e8e8e8"/><circle r="1.25" fill="#444"/><circle cx=".3" cy="-.3" r=".45" fill="#e8e8e8"/></svg>
<div class="a" style="left:542.2px;top:177.8px;width:16.8px;height:12.4px;background:#fff;border:.5px solid #cfcfcf"></div>
<div class="t pt" style="left:563.8px;top:185px;font-size:5.8px;color:#ededed">背景</div>
<svg style="left:625px;top:180px" width="8" height="8" viewBox="-4 -4 8 8"><rect x="-2.2" y="-.4" width="4.4" height="3.4" fill="none" stroke="#cfcfcf" stroke-width=".7"/><path d="M-1.3 -.4 V-1.6 A1.3 1.3 0 0 1 1.3 -1.6 V-.4" fill="none" stroke="#cfcfcf" stroke-width=".7"/></svg>
<div class="a" style="left:641.6px;top:175.6px;width:8.4px;height:295px;background:#4d4d4d"></div>
<div class="a" style="left:523.5px;top:470.6px;width:126.5px;height:.8px;background:#4b4b4b"></div>
<svg style="left:537.8px;top:475.2px" width="8" height="8" viewBox="-4 -4 8 8"><rect x="-3.4" y="-1.3" width="3.6" height="2.6" rx="1.3" fill="none" stroke="#8a8a8a" stroke-width=".7"/><rect x="-.2" y="-1.3" width="3.6" height="2.6" rx="1.3" fill="none" stroke="#8a8a8a" stroke-width=".7"/></svg>
<div class="t" style="left:553.6px;top:479px;font-family:'Liberation Serif',serif;font-style:italic;font-size:7px;color:#9a9a9a">fx</div>
<svg style="left:567.6px;top:475px" width="8" height="8" viewBox="-4 -4 8 8"><rect x="-3.2" y="-2.4" width="6.4" height="4.8" fill="#cfcfcf"/><circle r="1.4" fill="#444"/></svg>
<svg style="left:582px;top:475px" width="8" height="8" viewBox="-4 -4 8 8"><circle r="2.8" fill="none" stroke="#cfcfcf" stroke-width=".7"/><path d="M0 -2.8 A2.8 2.8 0 0 1 0 2.8 Z" fill="#cfcfcf" transform="rotate(45)"/></svg>
<svg style="left:596.8px;top:475px" width="8" height="8" viewBox="-4 -4 8 8"><path d="M-3.2 -2.4 H-.8 L0 -1.6 H3.2 V2.4 H-3.2 Z" fill="#cfcfcf"/></svg>
<svg style="left:612px;top:475px" width="8" height="8" viewBox="-4 -4 8 8"><path d="M-2.8 -2.6 H2.8 V2.6 H-.6 L-2.8 .6 Z" fill="none" stroke="#cfcfcf" stroke-width=".8"/><path d="M-2.8 .6 H-.6 V2.6" fill="none" stroke="#cfcfcf" stroke-width=".6"/></svg>
<svg style="left:627.4px;top:475px" width="8" height="8" viewBox="-4 -4 8 8"><path d="M-2.4 -1.6 H2.4 L2 3 H-2 Z" fill="#7c7c7c"/><path d="M-3 -2.2 H3 M-1 -3 H1" stroke="#7c7c7c" stroke-width=".8"/></svg>
<div id="wm" class="a"></div>
<div class="t" style="left:481.8px;top:415.1px;font-size:29.8px;font-weight:bold;color:#1dc23b;letter-spacing:0px">百科全说</div>
<div class="t" style="left:490px;top:442.5px;font-size:17.4px;color:#8a8a8a">助你轻松解决</div>
</body>
</html>
